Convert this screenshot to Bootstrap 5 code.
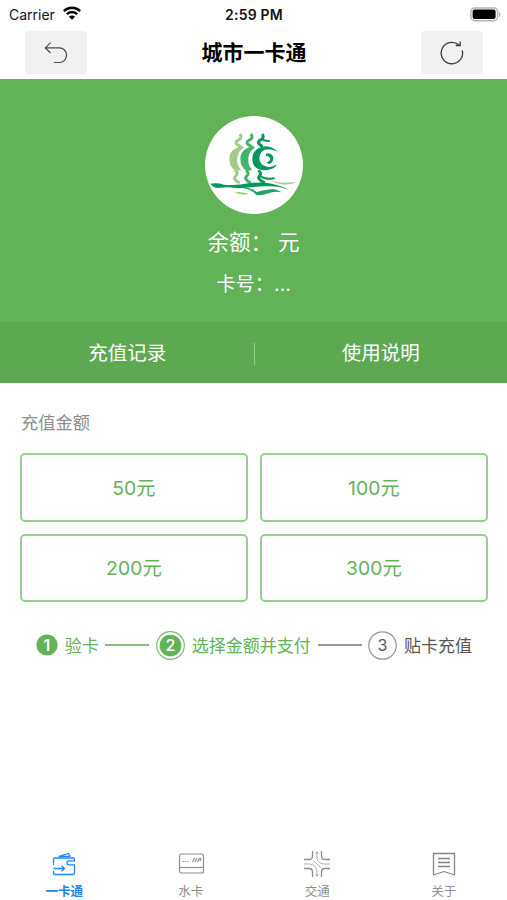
<!DOCTYPE html>
<html lang="zh-CN">
<head>
<meta charset="utf-8">
<meta name="viewport" content="width=device-width, initial-scale=1">
<title>城市一卡通</title>
<link href="https://cdn.jsdelivr.net/npm/bootstrap@5.3.0/dist/css/bootstrap.min.css" rel="stylesheet">
<style>
:root { --leaf: #62b357; }
body { font-family: Inter, "Noto Sans CJK SC", sans-serif; color: #111; height: 900px; }
.screen { height: 900px; }
.status-bar { height: 27px; font-size: 14px; line-height: 27px; padding: 0 6px 0 9px; }
.status-bar .clock { font-weight: 600; font-size: 13.5px; letter-spacing: .2px; }
.status-bar .clock { padding-top: 1px; margin-left: -2px; font-size: 14px; }
.wifi { margin-top: -2px; }
.title-bar { height: 52px; padding: 0 24px 1px 25px; }
.title-bar h1 { font-size: 21px; font-weight: 700; line-height: 30px; color: #000; }
.tool-btn { width: 62px; height: 43px; background: #f1f1f1; border-radius: 4px; }
.hero { height: 243px; background: var(--leaf); padding-top: 37px; }
.logo { width: 98px; height: 98px; }
.balance { font-size: 21.5px; line-height: 32px; margin-top: 12px; word-spacing: -3px; }
.card-no { font-size: 19.3px; line-height: 30px; margin-top: 11px; }
.link-band { height: 61px; background: #5da951; font-size: 19.5px; padding: 2px 0 0 1px; }
.link-band .split { width: 1px; height: 22px; background: #94cb8b; }
.amounts { padding: 28px 19px 0 20px; }
.amounts .caption { font-size: 17.3px; line-height: 24px; color: #8e8e8e; margin-bottom: 18px; padding-left: 1px; }
.amount-grid { display: grid; grid-template-columns: 1fr 1fr; gap: 12px; }
.amount { height: 68.5px; border: 2px solid #98cf90; border-radius: 5px; color: var(--leaf); font-size: 19.3px; padding: 2px 0 0; background: #fff; letter-spacing: .1px; }
.steps { padding: 28px 35px 0 36px; font-size: 17px; line-height: 29px; color: var(--leaf); white-space: nowrap; }
.steps svg { flex: none; }
.steps .step-name { padding-top: 2px; margin-bottom: -1px; }
.rule { width: 44px; height: 2px; background: #81c178; flex: none; }
.rule.todo { background: #999; }
.todo-text { color: #555; }
.tabs { height: 50px; font-size: 12.5px; line-height: 18px; color: #8f8f8f; padding-left: 1px; }
.tabs a { color: inherit; text-decoration: none; }
.tabs a.on { color: #2084f4; font-weight: 600; }
.tabs svg { display: block; margin-bottom: 5px; }
</style>
</head>
<body class="bg-white">
<main class="screen d-flex flex-column overflow-hidden">
  <div class="status-bar row g-0 align-items-center">
    <div class="col d-flex align-items-center">Carrier
      <svg class="wifi ms-2" width="18" height="14" viewBox="0 0 18 14" fill="none" stroke="#000" stroke-width="2.4"><path d="M.9 5.2a11.4 11.4 0 0 1 16.2 0M3.8 8.2a7.3 7.3 0 0 1 10.4 0"/><path d="M9 13.8 5.9 10.7a4.4 4.4 0 0 1 6.2 0Z" fill="#000" stroke="none"/></svg>
    </div>
    <div class="col-auto clock">2:59 PM</div>
    <div class="col d-flex justify-content-end">
      <svg width="31" height="15" viewBox="0 0 31 15"><rect x=".9" y=".9" width="26.7" height="12.8" rx="3.8" fill="#fff" stroke="#b5b5b5" stroke-width="1.5"/><rect x="2.6" y="2.5" width="23" height="9.6" rx="2" fill="#000"/><path d="M29 5v5c2.2-.8 2.2-4.200 0-5Z" fill="#b5b5b5"/></svg>
    </div>
  </div>

  <header class="title-bar d-flex align-items-center justify-content-between">
    <button class="tool-btn btn border-0 p-0 d-flex align-items-center justify-content-center" aria-label="返回">
      <svg width="24" height="24" viewBox="0 0 24 24" fill="none" stroke="#4a4a4a" stroke-width="1.2"><path d="M6.500 1.700 1.300 6.900l5.200 5.100M1.300 6.900H15.500a7 7.300 0 0 1 0 14.600H10"/></svg>
    </button>
    <h1 class="m-0">城市一卡通</h1>
    <button class="tool-btn btn border-0 p-0 d-flex align-items-center justify-content-center" aria-label="刷新">
      <svg width="26" height="26" viewBox="0 0 26 26" fill="none" stroke="#3c3c3c" stroke-width="1.3"><path d="M23.300 10.500A10.700 10.700 0 1 1 19.700 4.800M21.200 1.400V5.500H16.700"/></svg>
    </button>
  </header>

  <section class="hero d-flex flex-column align-items-center text-white">
    <svg class="logo" viewBox="30 33 294 294">
      <circle cx="177" cy="180" r="147" fill="#fff"/>
      <defs>
        <g id="curl" fill="none" stroke-width="9">
          <path d="M135 87q8 11-4 18-15 7-3 15 9 3 7 9"/>
          <path d="M120 196q12 9 2 17-10 9 12 21"/>
        </g>
        <path id="crescent" d="M144 123q-41 8-41 38 0 26 20 37l15-3q-13-14-11-35 2-23 19-31Z"/>
      </defs>
      <use href="#curl" stroke="#9fcd88"/><use href="#crescent" fill="#9fcd88"/>
      <use href="#curl" x="33" stroke="#41b469"/><use href="#crescent" x="33" fill="#41b469"/>
      <g fill="none" stroke="#05985a">
        <path stroke-width="9" d="M202 87q7 10-4 17-14 7-3 15 6 3 6 9M190 196q12 9 3 17-8 9 16 20"/>
        <path stroke-width="6" d="M199 101q8 8 25 7M192 211q20 14 47 9"/>
      </g>
      <path fill="#05985a" d="M248 141q-12-15-35-17-41 4-41 38 0 35 42 34 23-2 32-18-16 10-30 7-23-4-23-26 2-26 28-26 15 1 27 8Z"/>
      <path fill="#05985a" d="M214 145q18 0 21 12 2 14-13 21l-8-6q12-3 11-11-1-7-13-8Z"/>
      <path fill="#05985a" d="M45 236q22-4 42 3 40 3 73-4 41-6 70 1 32 7 52 18-32-11-60-10-29-1-52 3-34 5-72 0-13 0-32 2-12-2-21-13Z"/>
      <path fill="#25a465" d="M142 249q24-3 43 12 27-8 48-9 14 1 27 10-15-3-29 0-24 9-46 9-12-16-43-22Z"/>
      <path fill="#9fcd88" d="M118 262q18-4 43 4-18 7-43-4ZM228 227q30 11 80 3-24 11-48 8-18-3-32-11Z"/>
    </svg>
    <div class="balance">余额：&nbsp; 元</div>
    <div class="card-no">卡号：...</div>
  </section>

  <nav class="link-band d-flex align-items-center text-white text-center">
    <span class="flex-fill w-50">充值记录</span>
    <span class="split"></span>
    <span class="flex-fill w-50">使用说明</span>
  </nav>

  <section class="amounts">
    <div class="caption">充值金额</div>
    <div class="amount-grid">
      <button class="amount btn">50元</button>
      <button class="amount btn">100元</button>
      <button class="amount btn">200元</button>
      <button class="amount btn">300元</button>
    </div>
  </section>

  <section class="steps d-flex align-items-center justify-content-between">
    <svg width="22" height="22" viewBox="0 0 22 22"><circle cx="11" cy="11" r="10.600" fill="#62b357"/><text x="11" y="16.800" text-anchor="middle" font-size="16" font-weight="600" fill="#fff">1</text></svg>
    <span class="step-name">验卡</span>
    <span class="rule"></span>
    <svg width="29" height="29" viewBox="0 0 29 29"><circle cx="14.500" cy="14.500" r="13.800" fill="#fff" stroke="#79bd70" stroke-width="1.200"/><circle cx="14.500" cy="14.500" r="10.800" fill="#62b357"/><text x="14.500" y="20.300" text-anchor="middle" font-size="16" font-weight="500" fill="#fff">2</text></svg>
    <span class="step-name">选择金额并支付</span>
    <span class="rule todo"></span>
    <svg width="29" height="29" viewBox="0 0 29 29"><circle cx="14.500" cy="14.500" r="13.700" fill="#fff" stroke="#999" stroke-width="1.300"/><text x="14.500" y="20.300" text-anchor="middle" font-size="16" fill="#555">3</text></svg>
    <span class="step-name todo-text">贴卡充值</span>
  </section>

  <nav class="tabs row g-0 mt-auto text-center">
    <a class="col on d-flex flex-column align-items-center" href="#">
      <svg width="28" height="28" viewBox="0 0 28 28" fill="none" stroke="#2084f4" stroke-width="1.300" stroke-linejoin="round"><path d="M3.500 15V9.500q0-1.500 1.500-1.500H23q1.500 0 1.500 1.500v1.300H19q-2 0-2 2t2 2h5.500v8q0 1.700-1.700 1.700H5.200q-1.700 0-1.700-1.700V21M3.500 18.500H14M11.500 15.700l3 2.800-3 2.800M9 6.300 18.500 3.500l1.500 2.800Z"/></svg>
      <span>一卡通</span>
    </a>
    <a class="col d-flex flex-column align-items-center" href="#">
      <svg width="28" height="28" viewBox="0 0 28 28" fill="none" stroke="#8d8d8d" stroke-width="1.200"><rect x="2.500" y="4" width="24" height="19" rx="2"/><path d="M2.500 17.500h24"/><path d="M5.500 11.500h6" stroke-dasharray="1.300 1"/><path d="m15.500 12 2-4m.5 4 2-4m.5 4 2-4m.5 3 1-3"/></svg>
      <span>水卡</span>
    </a>
    <a class="col d-flex flex-column align-items-center" href="#">
      <svg width="28" height="28" viewBox="0 0 28 28" fill="none" stroke="#8d8d8d" stroke-width="1.300"><path d="M1 9.500h5q3.500 0 3.500-3.500V1M18.500 1v5q0 3.500 3.500 3.500h5M1 18.500h5q3.500 0 3.500 3.500v5M18.500 27v-5q0-3.500 3.500-3.500h5"/><path stroke="#b0b0b0" stroke-width="1" d="M14 1.500v5.500q0 6 6.500 7H27M1 14h5.500q7.500 1 7.500 8v4.500M10.500 10.500l7 7M12.500 4 14 2l1.500 2M12.500 24l1.500 2 1.500-2"/></svg>
      <span>交通</span>
    </a>
    <a class="col d-flex flex-column align-items-center" href="#">
      <svg width="28" height="28" viewBox="0 0 28 28" fill="none" stroke="#858585" stroke-width="1.300" stroke-linejoin="round"><path d="M3.500 3.500h21v21.500L14 21.500 3.500 25ZM8 8.500h12M8 12.500h12M8 16.500h12"/></svg>
      <span>关于</span>
    </a>
  </nav>
</main>
<script src="https://cdn.jsdelivr.net/npm/bootstrap@5.3.0/dist/js/bootstrap.bundle.min.js"></script>
</body>
</html>
